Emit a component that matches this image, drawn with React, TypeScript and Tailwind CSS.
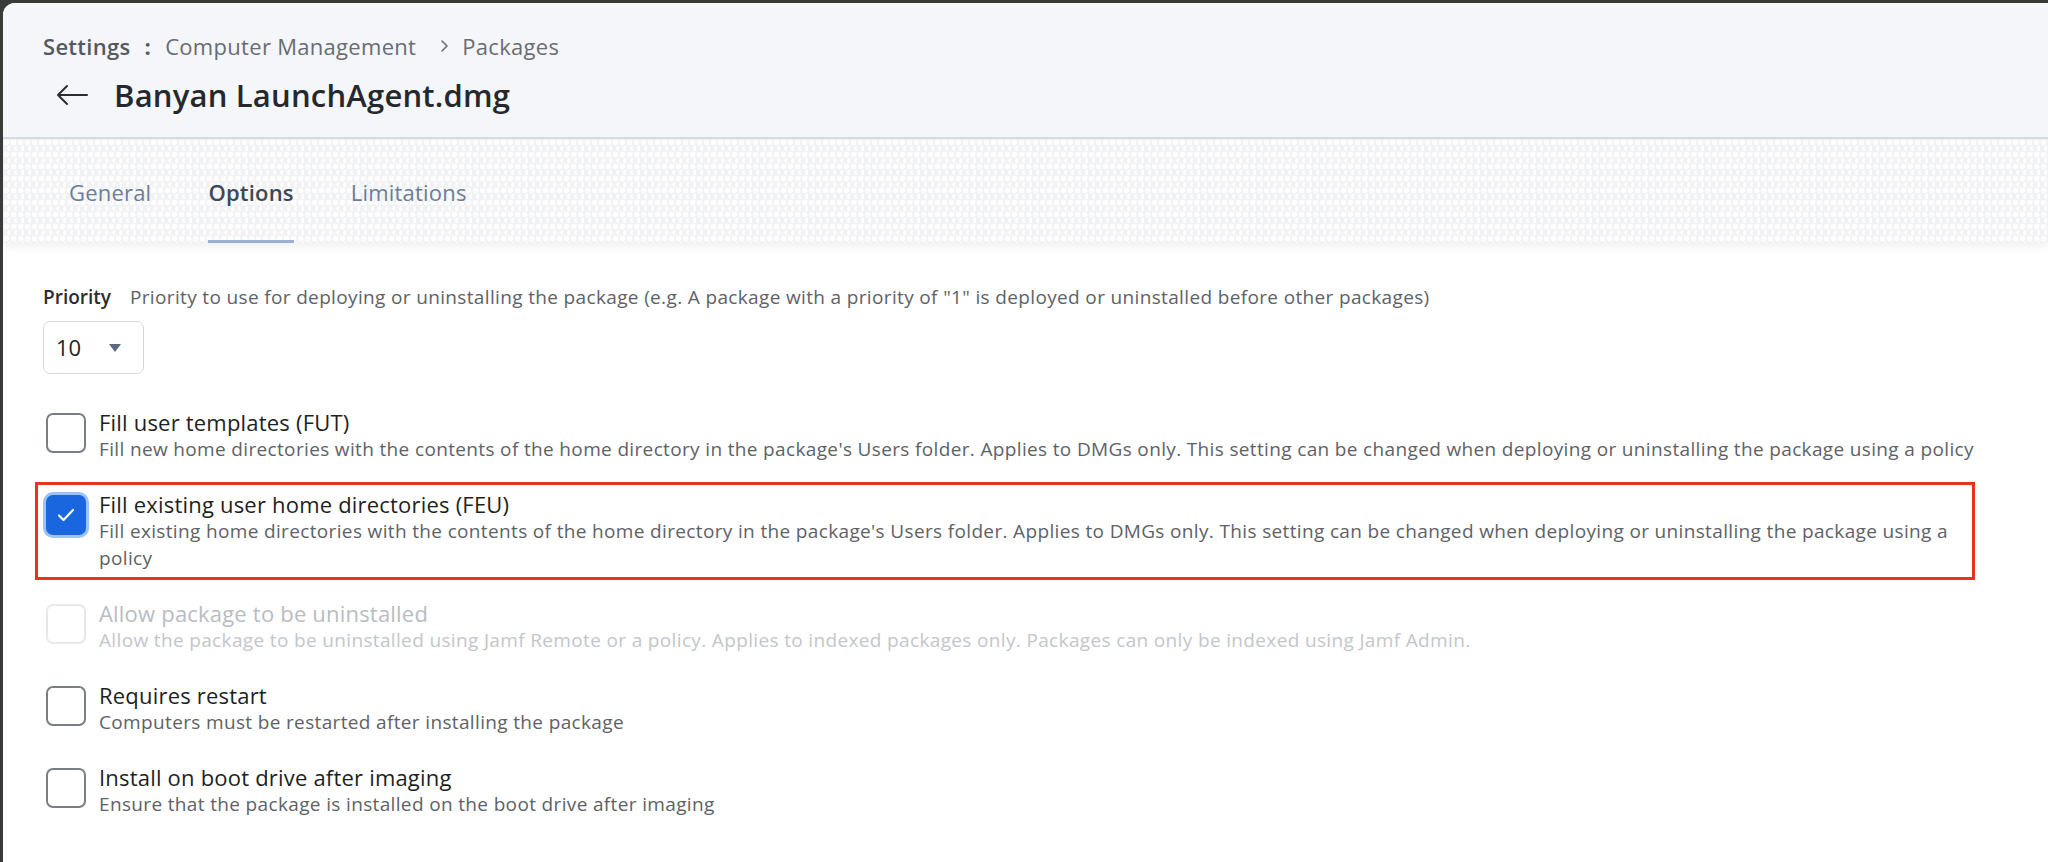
import { ReactNode } from 'react';

const font = { fontFamily: '"Open Sans", "Liberation Sans", sans-serif' };

type Row = {
  label: string;
  desc: string;
  checked?: boolean;
  disabled?: boolean;
  highlight?: boolean;
};

const rows: Row[] = [
  {
    label: 'Fill user templates (FUT)',
    desc: "Fill new home directories with the contents of the home directory in the package's Users folder. Applies to DMGs only. This setting can be changed when deploying or uninstalling the package using a policy",
  },
  {
    label: 'Fill existing user home directories (FEU)',
    desc: "Fill existing home directories with the contents of the home directory in the package's Users folder. Applies to DMGs only. This setting can be changed when deploying or uninstalling the package using a policy",
    checked: true,
    highlight: true,
  },
  {
    label: 'Allow package to be uninstalled',
    desc: 'Allow the package to be uninstalled using Jamf Remote or a policy. Applies to indexed packages only. Packages can only be indexed using Jamf Admin.',
    disabled: true,
  },
  {
    label: 'Requires restart',
    desc: 'Computers must be restarted after installing the package',
  },
  {
    label: 'Install on boot drive after imaging',
    desc: 'Ensure that the package is installed on the boot drive after imaging',
  },
];

const Checkbox = ({ checked, disabled }: { checked?: boolean; disabled?: boolean }) => {
  if (checked) {
    return (
      <div className="mt-[5px] flex h-[40px] w-[40px] shrink-0 items-center justify-center rounded-[7px] bg-[#1a66df] shadow-[0_0_0_3px_#9cc3f6]">
        <svg width="18" height="14" viewBox="0 0 18 14" fill="none">
          <path d="M2 7.5l4.5 4.5L16 2" stroke="#ffffff" strokeWidth="2.2" strokeLinecap="round" strokeLinejoin="round" />
        </svg>
      </div>
    );
  }
  return (
    <div
      className={
        disabled
          ? 'mt-[5px] h-[40px] w-[40px] shrink-0 rounded-[7px] border-2 border-[#e6e8eb]'
          : 'mt-[5px] h-[40px] w-[40px] shrink-0 rounded-[7px] border-2 border-[#797e86]'
      }
    />
  );
};

const OptionRow = ({ row }: { row: Row }) => {
  const body = (
    <div className="flex gap-[13px] pl-[3px]">
      <Checkbox checked={row.checked} disabled={row.disabled} />
      <div className="min-w-0 flex-1">
        <div
          className={
            row.disabled
              ? 'text-[22px] leading-[28px] tracking-[0.2px] text-[#b9bcc1]'
              : 'text-[22px] leading-[28px] tracking-[0.2px] text-[#1d1f22]'
          }
        >
          {row.label}
        </div>
        <div
          className={
            row.disabled
              ? 'text-[19px] leading-[27px] tracking-[0.35px] text-[#c3c6ca]'
              : 'text-[19px] leading-[27px] tracking-[0.35px] text-[#5e6267]'
          }
        >
          {row.desc}
        </div>
      </div>
    </div>
  );

  if (row.highlight) {
    return (
      <div className="-my-[8px] -ml-[8px] w-[1940px] border-[3px] border-[#e8341c] py-[5px] pl-[5px] pr-[20px]">
        {body}
      </div>
    );
  }
  return body;
};

const Tab = ({ children, active }: { children: ReactNode; active?: boolean }) => (
  <div
    className={
      active
        ? 'border-b-[3px] border-[#9ab1cf] pb-[34px] text-[22px] font-semibold leading-[28px] tracking-[0.2px] text-[#3c4757]'
        : 'border-b-[3px] border-transparent pb-[34px] text-[22px] leading-[28px] tracking-[0.2px] text-[#6a7d99]'
    }
  >
    {children}
  </div>
);

export default function App() {
  return (
    <div className="h-screen bg-[#3a3a3a] pl-[3px] pt-[3px]" style={font}>
      <div className="flex h-full flex-col overflow-hidden rounded-tl-[12px] bg-white">
        {/* header */}
        <div className="border-b-2 border-[#d8dbe0] bg-[#f5f6f9] px-[40px] pb-[22px] pt-[29px]">
          <div className="flex items-center text-[22px] leading-[28px] tracking-[0.3px] text-[#686c73]">
            <span className="font-semibold text-[#55595f]">Settings</span>
            <span className="mx-[14px] font-bold text-[#55595f]">:</span>
            <span>Computer Management</span>
            <svg className="ml-[24px] mr-[13px]" width="9" height="14" viewBox="0 0 9 14" fill="none">
              <path d="M2 2l5 5-5 5" stroke="#6b6f75" strokeWidth="1.6" strokeLinecap="round" strokeLinejoin="round" />
            </svg>
            <span>Packages</span>
          </div>
          <div className="mt-[15px] flex items-center">
            <svg className="ml-[13px] mr-[26px]" width="32" height="22" viewBox="0 0 32 22" fill="none">
              <path d="M31 11H2M11 2l-9 9 9 9" stroke="#2a2d31" strokeWidth="2" strokeLinecap="round" strokeLinejoin="round" />
            </svg>
            <h1 className="text-[31px] font-semibold leading-[40px] tracking-[0.2px] text-[#25282c]">Banyan LaunchAgent.dmg</h1>
          </div>
        </div>

        {/* tabs */}
        <div className="relative z-10 flex items-end gap-[57px] bg-[#f1f2f4] pl-[66px] pt-[39px] shadow-[0_4px_8px_rgba(0,0,0,0.06)] [background-image:radial-gradient(circle_at_3.5px_3.5px,#fdfdfd_2.6px,transparent_3.2px),radial-gradient(circle_at_7px_9.5px,#fdfdfd_2.6px,transparent_3.2px)] [background-size:7px_12px]">
          <Tab>General</Tab>
          <Tab active>Options</Tab>
          <Tab>Limitations</Tab>
        </div>

        {/* content */}
        <div className="flex-1 px-[40px] pt-[42px]">
          <div className="flex items-baseline gap-[19px] leading-[24px]">
            <span className="text-[19px] font-semibold text-[#2a2d31]">Priority</span>
            <span className="text-[19px] tracking-[0.35px] text-[#5e6267]">
              Priority to use for deploying or uninstalling the package (e.g. A package with a priority of "1" is deployed or uninstalled before other packages)
            </span>
          </div>
          <div className="mt-[12px] flex h-[53px] w-[101px] items-center justify-between rounded-[7px] border border-[#d6d9dd] bg-white pl-[12px] pr-[22px]">
            <span className="text-[22px] text-[#1d1f22]">10</span>
            <svg width="12" height="8" viewBox="0 0 12 8">
              <path d="M0 0h12L6 8z" fill="#5b6a7f" />
            </svg>
          </div>

          <div className="mt-[34px] flex flex-col gap-[27px]">
            {rows.map((row) => (
              <OptionRow key={row.label} row={row} />
            ))}
          </div>
        </div>
      </div>
    </div>
  );
}
